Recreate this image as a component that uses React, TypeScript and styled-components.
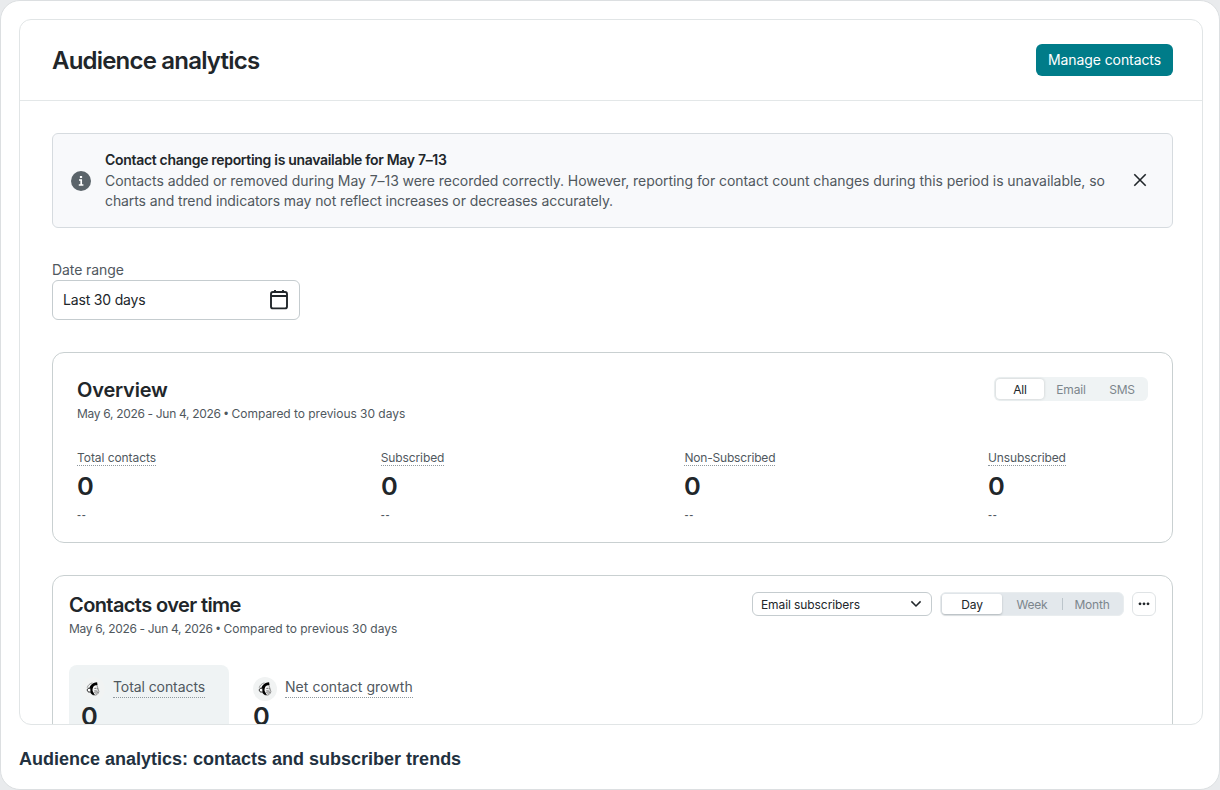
import React from 'react';
import styled, { createGlobalStyle } from 'styled-components';

const Global = createGlobalStyle`
  *, *::before, *::after { box-sizing: border-box; }
  body { margin: 0; background: #e9ebed; font-family: Inter, "Liberation Sans", sans-serif; color: #21262a; }
  h1, h2, p { margin: 0; }
  button { font-family: inherit; margin: 0; padding: 0; border: 0; background: none; color: inherit; }
`;

const Page = styled.figure`
  margin: 0;
  width: 1220px;
  height: 790px;
  padding: 18px 16px 0 18px;
  border: 1px solid #dcdfe1;
  border-radius: 20px;
  background: #fff;
  overflow: hidden;
`;

const Frame = styled.div`
  height: 706px;
  border: 1px solid #e1e5e6;
  border-radius: 12px;
  overflow: hidden;
`;

const Header = styled.header`
  display: flex;
  align-items: center;
  justify-content: space-between;
  height: 81px;
  padding: 0 29px 0 32px;
  border-bottom: 1px solid #e3e7e8;
`;

const Title = styled.h1`
  padding-top: 2px;
  font-size: 24px;
  line-height: 32px;
  font-weight: 600;
  letter-spacing: -0.8px;
`;

const PrimaryButton = styled.button`
  width: 137px;
  height: 32px;
  border-radius: 6px;
  background: #007c89;
  color: #fff;
  font-size: 14px;
  line-height: 32px;
  letter-spacing: -0.09px;
`;

const Body = styled.main`
  display: flex;
  flex-direction: column;
  padding: 32px 29px 0 32px;
`;

const Alert = styled.section`
  display: flex;
  align-items: center;
  height: 95px;
  padding: 0 25px 0 18px;
  border: 1px solid #d6dbdf;
  border-radius: 6px;
  background: #f8f9fb;
`;

const AlertText = styled.div`
  flex: 1;
  margin-left: 14px;
  padding-bottom: 2px;
  font-size: 14px;
  line-height: 20px;
  color: #50585e;
`;

const AlertTitle = styled.p`
  line-height: 22px;
  font-weight: 600;
  letter-spacing: -0.31px;
  color: #21262a;
`;

const AlertLine = styled.p<{ $track: number }>`
  white-space: nowrap;
  letter-spacing: ${p => p.$track}px;
`;

const CloseButton = styled.button`
  display: grid;
  place-items: center;
  width: 14px;
  height: 14px;
  margin-top: -2px;
`;

const Field = styled.label`
  display: flex;
  flex-direction: column;
  margin-top: 32px;
  font-size: 14px;
  line-height: 20px;
  letter-spacing: -0.08px;
  color: #50585e;
`;

const DateInput = styled.div`
  display: flex;
  align-items: center;
  justify-content: space-between;
  width: 248px;
  height: 40px;
  padding: 0 10px;
  border: 1px solid #c5cccf;
  border-radius: 6px;
  letter-spacing: -0.18px;
  color: #21262a;
`;

const Card = styled.section<{ $height: number; $pad: string }>`
  height: ${p => p.$height}px;
  flex-shrink: 0;
  margin-top: 32px;
  padding: ${p => p.$pad};
  border: 1px solid #c9d0d1;
  border-radius: 12px;
`;

const CardHead = styled.div`
  display: flex;
  align-items: flex-start;
  justify-content: space-between;
`;

const CardTitle = styled.h2<{ $track: number }>`
  font-size: 20px;
  line-height: 26px;
  font-weight: 600;
  letter-spacing: ${p => p.$track}px;
`;

const PeriodLine = styled.p`
  display: flex;
  margin-top: 1px;
  font-size: 12px;
  line-height: 20px;
  letter-spacing: -0.03px;
  color: #50585e;
`;

const Dates = styled.span`
  letter-spacing: -0.32px;
`;

const Bullet = styled.span`
  width: 11px;
  text-align: center;
  font-family: "Liberation Sans", sans-serif;
`;

const ChannelTabs = styled.div`
  display: flex;
  align-items: center;
  width: 154px;
  height: 24px;
  padding: 0 2px;
  border-radius: 6px;
  background: #eff3f4;
`;

const ChannelTab = styled.button<{ $active?: boolean; $width: number }>`
  width: ${p => p.$width}px;
  height: 20px;
  padding-top: 1px;
  border-radius: 4px;
  font-size: 12px;
  line-height: 19px;
  letter-spacing: -0.2px;
  color: ${p => (p.$active ? '#21262a' : '#7c868c')};
  background: ${p => (p.$active ? '#fff' : 'none')};
  box-shadow: ${p => (p.$active ? '0 0 3px rgba(33, 38, 42, 0.2)' : 'none')};
`;

const Stats = styled.div`
  display: grid;
  grid-template-columns: repeat(4, 303.7px);
  margin-top: 25px;
`;

const Stat = styled.div`
  display: flex;
  flex-direction: column;
  align-items: flex-start;
`;

const StatLabel = styled.span<{ $track: number }>`
  font-size: 12px;
  line-height: 18px;
  height: 17px;
  letter-spacing: ${p => p.$track}px;
  color: #50585e;
  border-bottom: 1px dotted #8f989d;
`;

const Value = styled.span`
  margin-top: 5px;
  font-size: 24px;
  line-height: 32px;
  font-weight: 600;
  transform: scaleX(1.06);
  transform-origin: left;
`;

const Delta = styled.span`
  margin-top: 1px;
  font-family: "Liberation Sans", sans-serif;
  font-size: 12px;
  line-height: 22px;
  letter-spacing: 0.8px;
  color: #50585e;
`;

const Controls = styled.div`
  display: flex;
  align-items: center;
`;

const Select = styled.button`
  display: flex;
  align-items: center;
  justify-content: space-between;
  width: 180px;
  height: 24px;
  padding: 0 9px 0 8px;
  border: 1px solid #c5cccf;
  border-radius: 6px;
  font-size: 12px;
  letter-spacing: -0.09px;
`;

const Intervals = styled.div`
  display: flex;
  align-items: center;
  width: 184px;
  height: 24px;
  margin: 0 8px;
  padding: 0 1px;
  border: 1px solid #e9edef;
  border-radius: 6px;
  background: #e3e8ec;
`;

const Interval = styled.button<{ $active?: boolean; $divided?: boolean }>`
  position: relative;
  width: 60px;
  height: 20px;
  padding-top: 1px;
  border-radius: 3px;
  font-size: 12px;
  line-height: 19px;
  letter-spacing: -0.2px;
  color: ${p => (p.$active ? '#21262a' : '#7c868c')};
  background: ${p => (p.$active ? '#fff' : 'none')};
  box-shadow: ${p => (p.$active ? '0 1px 2px rgba(33, 38, 42, 0.25)' : 'none')};
  &::before {
    content: '';
    display: ${p => (p.$divided ? 'block' : 'none')};
    position: absolute;
    left: 0;
    top: 4px;
    width: 1px;
    height: 12px;
    background: #bcc5cb;
  }
`;

const MoreButton = styled.button`
  display: grid;
  place-items: center;
  width: 24px;
  height: 24px;
  border: 1px solid #dfe3e5;
  border-radius: 6px;
`;

const Metrics = styled.div`
  display: flex;
  gap: 12px;
  margin-top: 26px;
`;

const Metric = styled.div<{ $active?: boolean }>`
  display: flex;
  flex-direction: column;
  align-items: flex-start;
  width: ${p => (p.$active ? '160px' : '184px')};
  height: 110px;
  padding: 12px 12px 0;
  border-radius: 8px;
  background: ${p => (p.$active ? '#eff3f4' : 'none')};
  ${Value} { margin-top: 0; }
`;

const MetricHead = styled.div`
  display: flex;
  height: 24px;
`;

const Badge = styled.span`
  display: grid;
  place-items: center;
  width: 24px;
  height: 24px;
  border-radius: 12px;
  background: #f1f3f3;
`;

const MetricLabel = styled.span<{ $track: number }>`
  height: 21px;
  margin-left: 8px;
  font-size: 14px;
  line-height: 20px;
  letter-spacing: ${p => p.$track}px;
  white-space: nowrap;
  color: #50585e;
  border-bottom: 1px dotted #8f989d;
`;

const Caption = styled.figcaption`
  margin-top: 22px;
  font: 700 18px/24px "Liberation Sans", Arial, sans-serif;
  color: #22313f;
`;

const InfoIcon = () => (
  <svg width="20" height="20" viewBox="0 0 20 20">
    <circle cx="10" cy="10" r="10" fill="#5b646a" />
    <rect x="8.9" y="5" width="2.2" height="2" fill="#fff" />
    <path d="M8 9H10.2V13.8M7.8 14H12.4" fill="none" stroke="#fff" strokeWidth="1.7" />
  </svg>
);

const CloseIcon = () => (
  <svg width="14" height="14" viewBox="0 0 14 14" stroke="#21262a" strokeWidth="1.6">
    <path d="M1.3 1.3L12.7 12.7M12.7 1.3L1.3 12.7" />
  </svg>
);

const CalendarIcon = () => (
  <svg width="20" height="20" viewBox="0 0 20 20" fill="none" stroke="#21262a" strokeWidth="1.9">
    <rect x="2" y="2" width="16" height="16.4" rx="2" />
    <path d="M2 6H18M6 0V3M14 0V3" />
  </svg>
);

const ChevronIcon = () => (
  <svg width="12" height="8" viewBox="0 0 12 8" fill="none" stroke="#21262a" strokeWidth="1.5">
    <path d="M1.4 1.4L6 6L10.6 1.4" />
  </svg>
);

const MoreIcon = () => (
  <svg width="12" height="4" viewBox="0 0 12 4" fill="#21262a">
    <circle cx="2" cy="1.8" r="1.4" />
    <circle cx="6" cy="1.8" r="1.4" />
    <circle cx="10" cy="1.8" r="1.4" />
  </svg>
);

const MonkeyIcon = () => (
  <svg width="14" height="14" viewBox="0 0 14 14" fill="none">
    <path d="M4.6 6.2C5 3.9 7 2.5 10.8 2.8L12 6.5L12.9 9.7C12.4 12 10.4 13.4 8.4 13.2C6.2 13 5.2 11.8 4.6 10Z" fill="#f4f4f4" stroke="#555" strokeWidth=".6" />
    <path d="M3.6 7.1C3.3 3.9 6 .6 11.1.2L11.5 3.1C8.4 3 7 4.8 6.7 6.4C6.4 7.8 6.4 8.9 7.3 10.2L8.8 12.9C6.2 13.1 4.7 11.8 4.2 9.8Z" fill="#000" />
    <path d="M4.2 6.2C2 5.8 .9 7.2 1.4 8.7C1.8 10 3.2 10.4 4.5 9.7" fill="#fff" stroke="#111" strokeWidth="1" />
    <path d="M1.2 5.8C1.6 3.4 3.8 1.5 6.4 .8" stroke="#777" strokeWidth=".7" />
    <path d="M8.4 6.5L10.4 6.2M11.3 6.2V7.4M8.3 8.9L11.7 9.2M8.4 10.4C9.6 11.4 11.2 11.2 12.2 10.2" stroke="#444" strokeWidth=".75" />
  </svg>
);

const Period = () => (
  <PeriodLine>
    <Dates>May 6, 2026 - Jun 4, 2026</Dates>
    <Bullet>•</Bullet>
    <span>Compared to previous 30 days</span>
  </PeriodLine>
);

const stats = [
  { label: 'Total contacts', track: -0.06 },
  { label: 'Subscribed', track: -0.1 },
  { label: 'Non-Subscribed', track: -0.18 },
  { label: 'Unsubscribed', track: -0.13 },
];

export default function App() {
  return (
    <>
      <Global />
      <Page>
        <Frame>
          <Header>
            <Title>Audience analytics</Title>
            <PrimaryButton>Manage contacts</PrimaryButton>
          </Header>
          <Body>
            <Alert>
              <InfoIcon />
              <AlertText>
                <AlertTitle>Contact change reporting is unavailable for May 7–13</AlertTitle>
                <AlertLine $track={-0.06}>
                  Contacts added or removed during May 7–13 were recorded correctly. However, reporting for contact count changes during this period is unavailable, so
                </AlertLine>
                <AlertLine $track={-0.1}>charts and trend indicators may not reflect increases or decreases accurately.</AlertLine>
              </AlertText>
              <CloseButton aria-label="Dismiss"><CloseIcon /></CloseButton>
            </Alert>
            <Field>
              Date range
              <DateInput>
                Last 30 days
                <CalendarIcon />
              </DateInput>
            </Field>
            <Card $height={191} $pad="24px 24px 0">
              <CardHead>
                <div>
                  <CardTitle $track={-0.18}>Overview</CardTitle>
                  <Period />
                </div>
                <ChannelTabs>
                  <ChannelTab $active $width={48}>All</ChannelTab>
                  <ChannelTab $width={54}>Email</ChannelTab>
                  <ChannelTab $width={48}>SMS</ChannelTab>
                </ChannelTabs>
              </CardHead>
              <Stats>
                {stats.map(s => (
                  <Stat key={s.label}>
                    <StatLabel $track={s.track}>{s.label}</StatLabel>
                    <Value>0</Value>
                    <Delta>--</Delta>
                  </Stat>
                ))}
              </Stats>
            </Card>
            <Card $height={300} $pad="16px 16px 0">
              <CardHead>
                <div>
                  <CardTitle $track={-0.6}>Contacts over time</CardTitle>
                  <Period />
                </div>
                <Controls>
                  <Select>
                    Email subscribers
                    <ChevronIcon />
                  </Select>
                  <Intervals>
                    <Interval $active>Day</Interval>
                    <Interval>Week</Interval>
                    <Interval $divided>Month</Interval>
                  </Intervals>
                  <MoreButton aria-label="More"><MoreIcon /></MoreButton>
                </Controls>
              </CardHead>
              <Metrics>
                <Metric $active>
                  <MetricHead>
                    <Badge><MonkeyIcon /></Badge>
                    <MetricLabel $track={-0.08}>Total contacts</MetricLabel>
                  </MetricHead>
                  <Value>0</Value>
                </Metric>
                <Metric>
                  <MetricHead>
                    <Badge><MonkeyIcon /></Badge>
                    <MetricLabel $track={0.04}>Net contact growth</MetricLabel>
                  </MetricHead>
                  <Value>0</Value>
                </Metric>
              </Metrics>
            </Card>
          </Body>
        </Frame>
        <Caption>Audience analytics: contacts and subscriber trends</Caption>
      </Page>
    </>
  );
}
